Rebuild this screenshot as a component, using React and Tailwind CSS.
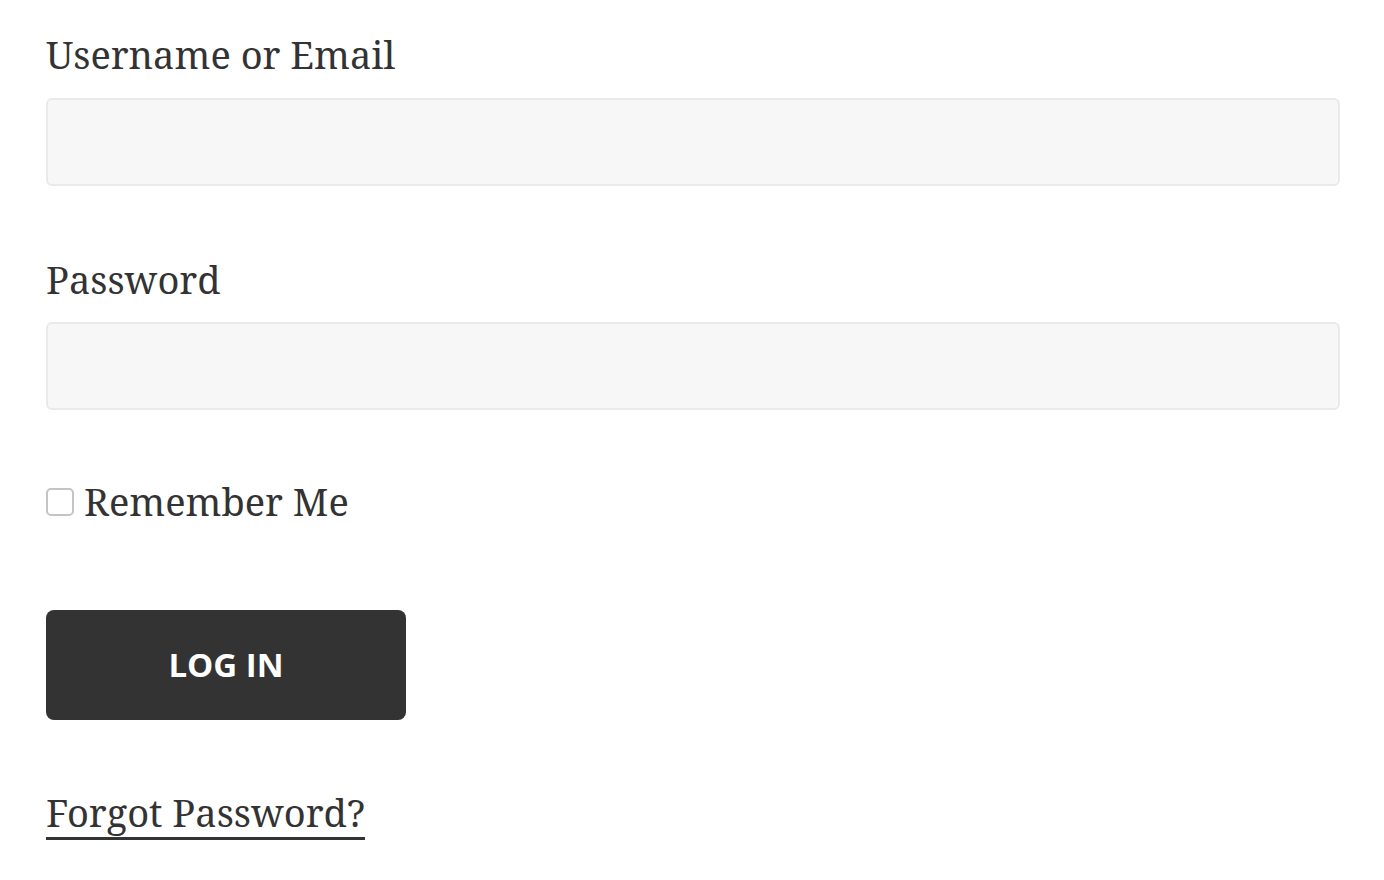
export default function App() {
  return (
    <div className="min-h-screen bg-white text-[#333] font-['Noto_Serif','DejaVu_Serif',serif]">
      <form className="flex flex-col pl-[46px] pr-[44px] pt-[27px]">
        <label className="block text-[38px] leading-[54px]">Username or Email</label>
        <input
          type="text"
          className="mt-[17px] h-[88px] w-full rounded-[6px] border-2 border-[#eaeaea] bg-[#f7f7f7] px-4 outline-none"
        />

        <label className="mt-[66px] block text-[38px] leading-[54px]">Password</label>
        <input
          type="password"
          className="mt-[16px] h-[88px] w-full rounded-[6px] border-2 border-[#eaeaea] bg-[#f7f7f7] px-4 outline-none"
        />

        <label className="mt-[64px] flex items-center text-[38px] leading-[54px]">
          <span className="mr-[10px] mt-[2px] h-[28px] w-[28px] rounded-[5px] border-2 border-[#c4c4c4] bg-white" />
          Remember Me
        </label>

        <div className="mt-[82px]">
          <button
            type="button"
            className="h-[110px] w-[360px] rounded-[8px] bg-[#333] font-['Open_Sans',sans-serif] text-[33px] font-bold text-white"
          >
            LOG IN
          </button>
        </div>

        <div className="mt-[68px]">
          <a href="#" className="inline-block border-b-[3px] border-[#333] pb-[1px] text-[38px] leading-[48px]">
            Forgot Password?
          </a>
        </div>
      </form>
    </div>
  );
}
